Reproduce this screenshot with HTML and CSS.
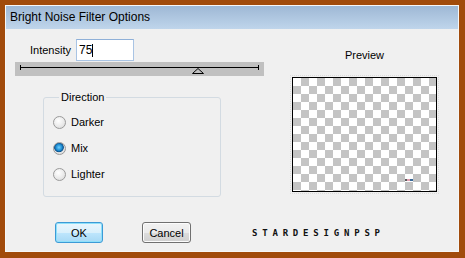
FILE: index.html
```html
<!DOCTYPE html>
<html lang="en">
<head>
    <meta charset="UTF-8">
    <title>Bright Noise Filter Options</title>
    <link rel="stylesheet" href="styles.css">
</head>
<body>
    <div class="window">
        <div class="titlebar">Bright Noise Filter Options</div>
        <div class="content">
            <div class="top">
                <div class="left">
                    <div class="intensity">
                        <span class="label">Intensity</span>
                        <div class="field">75<span class="caret"></span></div>
                    </div>
                    <div class="slider">
                        <svg width="249" height="14" viewBox="0 0 249 14">
                            <line x1="5" y1="5.5" x2="244" y2="5.5" stroke="#000" stroke-width="1"/>
                            <line x1="5.5" y1="3" x2="5.5" y2="8" stroke="#000" stroke-width="1"/>
                            <line x1="243.5" y1="3" x2="243.5" y2="8" stroke="#000" stroke-width="1"/>
                            <polygon points="183,6.5 177.5,11.5 188.5,11.5" fill="#c0c0c0" stroke="#000" stroke-width="1"/>
                        </svg>
                    </div>
                    <fieldset class="group">
                        <legend>Direction</legend>
                        <div class="option"><span class="radio"></span>Darker</div>
                        <div class="option"><span class="radio checked"></span>Mix</div>
                        <div class="option"><span class="radio"></span>Lighter</div>
                    </fieldset>
                </div>
                <div class="right">
                    <div class="preview-label">Preview</div>
                    <div class="preview"><span class="speck"></span></div>
                </div>
            </div>
            <div class="bottom">
                <button class="btn default" type="button">OK</button>
                <button class="btn" type="button">Cancel</button>
                <span class="signature">STARDESIGNPSP</span>
            </div>
        </div>
    </div>
</body>
</html>
```

FILE: styles.css
```css
html, body{
    margin: 0;
    height: 100%;
}
body{
    background-color: #a14b0b;
    padding: 5px 6px 6px 5px;
    box-sizing: border-box;
    font-family: "Liberation Sans", Arial, sans-serif;
    font-size: 11px;
    color: #000;
}
.window{
    height: 100%;
    box-sizing: border-box;
    border: 1px solid #f7f7f7;
    display: flex;
    flex-direction: column;
    background: #f0f0f0;
}
.titlebar{
    height: 23px;
    line-height: 22px;
    padding-left: 4px;
    font-size: 12px;
    background: linear-gradient(#9eb8d5, #bfd5eb);
    color: #000;
}
.content{
    flex: 1;
    background: #f0f0f0;
}
.top{
    display: flex;
}
.left{
    margin-left: 9px;
    width: 249px;
}
.intensity{
    display: flex;
    align-items: center;
    margin-top: 10px;
    padding-left: 15px;
    height: 22px;
}
.label{
    width: 46px;
}
.field{
    width: 58px;
    height: 22px;
    box-sizing: border-box;
    border: 1px solid #a9c4e4;
    border-top-color: #8fb0d8;
    background: #fff;
    padding-left: 2px;
    font-size: 12px;
    line-height: 20px;
    display: flex;
    align-items: center;
}
.caret{
    display: inline-block;
    width: 1px;
    height: 13px;
    background: #000;
}
.slider{
    margin-top: 1px;
    height: 14px;
    background: #c0c0c0;
}
.slider svg{
    display: block;
}
.group{
    margin: 14px 0 0 28px;
    width: 178px;
    box-sizing: border-box;
    border: 1px solid #d3dbe2;
    border-radius: 3px;
    padding: 5px 0 9px 9px;
}
.group legend{
    padding: 0 2px;
    margin-left: 6px;
    line-height: 14px;
}
.option{
    display: flex;
    align-items: center;
    height: 26px;
}
.radio{
    width: 13px;
    height: 13px;
    box-sizing: border-box;
    border-radius: 50%;
    border: 1px solid #9a9a9a;
    background: radial-gradient(circle at 40% 35%, #ffffff 0, #ececec 50%, #d6d6d6 100%);
    margin-right: 5px;
}
.radio.checked{
    background: radial-gradient(circle at 45% 40%, #6fd0ff 0, #1b8ad0 35%, #0c4f88 50%, #e6e6e6 58%, #d6d6d6 100%);
}
.right{
    margin-left: 28px;
    width: 145px;
}
.preview-label{
    margin-top: 19px;
    line-height: 14px;
    text-align: center;
}
.preview{
    position: relative;
    margin-top: 15px;
    width: 145px;
    height: 115px;
    box-sizing: border-box;
    border: 1px solid #000;
    outline: 1px dotted #dcdcdc;
    outline-offset: 1px;
    background: repeating-conic-gradient(#c4c4c4 0 25%, #fff 0 50%) 0 0/16px 16px;
}
.speck{
    position: absolute;
    left: 112px;
    top: 101px;
    width: 8px;
    height: 2px;
    background: linear-gradient(90deg, #5a5a5a 0 2px, #e0a0b0 2px 5px, #3a6a9a 5px);
}
.bottom{
    display: flex;
    align-items: center;
    margin-top: 25px;
    padding-left: 49px;
}
.btn{
    height: 21px;
    width: 49px;
    padding: 0;
    font-family: "Liberation Sans", Arial, sans-serif;
    font-size: 11px;
    color: #000;
    border: 1px solid #707070;
    border-radius: 3px;
    background: linear-gradient(#f2f2f2 0, #ebebeb 50%, #dddddd 51%, #cfcfcf 100%);
    box-shadow: inset 0 0 0 1px #fcfcfc;
}
.btn.default{
    width: 48px;
    margin-right: 39px;
    border-color: #3c9ad6;
    background: linear-gradient(#eaf6fd 0, #d9f0fc 50%, #bee6fd 51%, #a7d9f5 100%);
    box-shadow: inset 0 0 0 1px #8ee0fa;
}
.signature{
    margin-left: 61px;
    font-family: "DejaVu Sans Mono", monospace;
    font-weight: bold;
    font-size: 9px;
    letter-spacing: 4.8px;
    color: #111;
}
```
